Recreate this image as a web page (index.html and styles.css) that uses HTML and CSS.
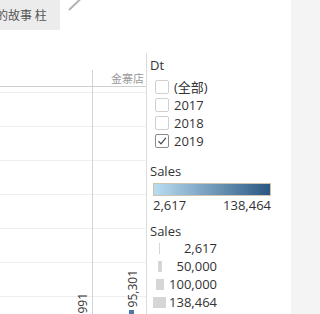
FILE: index.html
```html
<!DOCTYPE html>
<html lang="zh">
<head>
    <meta charset="UTF-8">
    <meta name="viewport" content="width=device-width, initial-scale=1.0">
    <title>销售仪表板</title>
    <link rel="stylesheet" href="styles.css">
</head>
<body>
    <div class="main">
        <div class="toolbar">
            <div class="tab"><span class="tab-text">的故事 柱</span></div>
            <svg class="pencil" width="14" height="11" viewBox="0 0 14 11">
                <line x1="1" y1="10" x2="12.5" y2="-1" stroke="#b3b3b3" stroke-width="2"/>
            </svg>
        </div>
        <div class="content">
            <!-- 表格区域 -->
            <div class="chart">
                <div class="head-row">
                    <div class="head-cell first"></div>
                    <div class="head-cell">金寨店</div>
                </div>
                <div class="chart-body">
                    <div class="col first"></div>
                    <div class="col"></div>
                    <span class="mark-label label-a">991</span>
                    <span class="mark-label label-b">95,301</span>
                    <span class="mark-bar"></span>
                </div>
            </div>

            <!-- 图例 -->
            <div class="legend">
                <div class="legend-title">Dt</div>
                <ul class="filter-list">
                    <li><span class="check"></span>(全部)</li>
                    <li><span class="check"></span>2017</li>
                    <li><span class="check"></span>2018</li>
                    <li><span class="check checked">
                        <svg width="12" height="12" viewBox="0 0 12 12">
                            <path d="M2.5 6.2 L5 8.8 L9.8 2.8" fill="none" stroke="#444" stroke-width="1.2"/>
                        </svg>
                    </span>2019</li>
                </ul>

                <div class="legend-title sales-title">Sales</div>
                <div class="ramp"></div>
                <div class="ramp-labels">
                    <span>2,617</span>
                    <span>138,464</span>
                </div>

                <div class="legend-title size-title">Sales</div>
                <div class="size-row">
                    <span class="size-cell"><span class="size-box" style="width: 1px;"></span></span>
                    <span class="size-value">2,617</span>
                </div>
                <div class="size-row">
                    <span class="size-cell"><span class="size-box" style="width: 4px;"></span></span>
                    <span class="size-value">50,000</span>
                </div>
                <div class="size-row">
                    <span class="size-cell"><span class="size-box" style="width: 8px;"></span></span>
                    <span class="size-value">100,000</span>
                </div>
                <div class="size-row">
                    <span class="size-cell"><span class="size-box" style="width: 13px;"></span></span>
                    <span class="size-value">138,464</span>
                </div>
            </div>
        </div>
    </div>
    <div class="side"></div>
</body>
</html>
```

FILE: styles.css
```css
* {
    margin: 0;
    padding: 0;
    box-sizing: border-box;
}

body {
    display: flex;
    height: 314px;
    overflow: hidden;
    background: #fff;
    color: #333;
    font-family: 'Open Sans', 'Noto Sans CJK SC', sans-serif;
    font-size: 13px;
}

.main {
    width: 291px;
    display: flex;
    flex-direction: column;
}

.side {
    flex: 1;
    background: #f4f4f4;
}

/* 顶部标签 */
.toolbar {
    height: 53px;
    display: flex;
    align-items: flex-start;
}

.tab {
    width: 60px;
    height: 30px;
    background: #ececec;
    overflow: hidden;
    white-space: nowrap;
    padding-top: 5px;
}

.tab-text {
    display: inline-block;
    margin-left: -4px;
    font-family: 'Noto Sans CJK SC', sans-serif;
    font-size: 12px;
    line-height: 20px;
    color: #555;
}

.pencil {
    margin-left: 8px;
}

.content {
    flex: 1;
    display: flex;
}

/* 表格 */
.chart {
    width: 147px;
    border-right: 1px solid #dcdcdc;
    display: flex;
    flex-direction: column;
    padding-top: 17px;
}

.head-row {
    display: grid;
    grid-template-columns: 93px 1fr;
    height: 17px;
    border-bottom: 1px solid #cfcfcf;
}

.head-cell {
    text-align: right;
    padding-right: 2px;
    font-family: 'Noto Sans CJK SC', sans-serif;
    font-size: 11px;
    line-height: 16px;
    color: #999;
}

.head-cell.first,
.col.first {
    border-right: 1px solid #d4d4d4;
}

.chart-body {
    position: relative;
    flex: 1;
    display: grid;
    grid-template-columns: 93px 1fr;
    background: repeating-linear-gradient(to bottom, #fff 0 5px, #efefef 5px 6px, #fff 6px 34px);
    overflow: hidden;
}

.mark-label {
    position: absolute;
    writing-mode: vertical-rl;
    transform: rotate(180deg);
    font-size: 12px;
    line-height: 10px;
    color: #333;
}

.label-a {
    left: 78px;
    top: 206px;
}

.label-b {
    left: 128px;
    top: 183px;
}

.mark-bar {
    position: absolute;
    left: 129px;
    top: 223px;
    width: 5px;
    height: 10px;
    background: #4a78ad;
}

/* 图例 */
.legend {
    flex: 1;
    padding: 3px 0 0 3px;
}

.legend-title {
    line-height: 18px;
}

.filter-list {
    list-style: none;
    margin-top: 4px;
}

.filter-list li {
    display: flex;
    align-items: center;
    height: 18px;
    line-height: 18px;
    padding-left: 5px;
}

.check {
    width: 14px;
    height: 14px;
    border: 1px solid #d0d0d0;
    border-radius: 2px;
    margin-right: 5px;
    display: flex;
    align-items: center;
    justify-content: center;
}

.check.checked {
    border-color: #8a8a8a;
}

.sales-title {
    margin-top: 12px;
}

.ramp {
    margin: 3px 0 0 3px;
    width: 118px;
    height: 13px;
    border: 1px solid #cdc3b0;
    background: linear-gradient(to right, #b9ddf1, #2a5783);
}

.ramp-labels {
    margin-left: 3px;
    width: 118px;
    display: flex;
    justify-content: space-between;
    line-height: 18px;
}

.size-title {
    margin-top: 8px;
    margin-bottom: -1px;
}

.size-row {
    display: flex;
    align-items: center;
    height: 18px;
    margin-left: 3px;
}

.size-cell {
    width: 13px;
    display: flex;
    justify-content: center;
}

.size-box {
    height: 11px;
    background: #d6d6d6;
}

.size-value {
    width: 51px;
    text-align: right;
    line-height: 18px;
}
```
